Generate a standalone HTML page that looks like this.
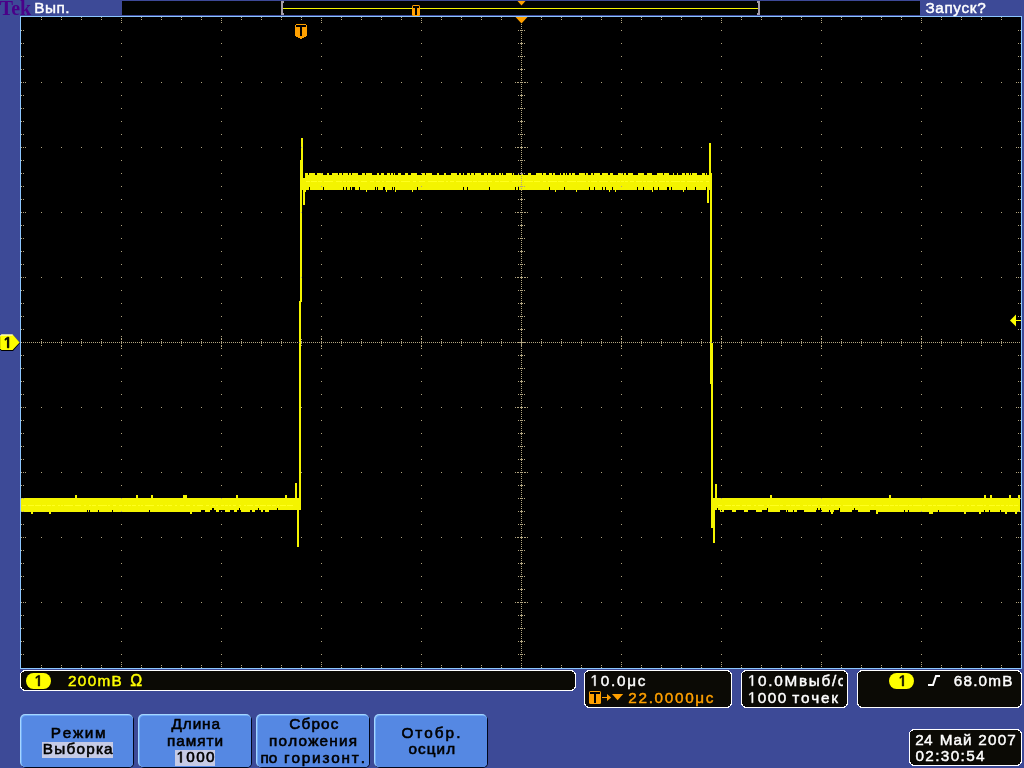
<!DOCTYPE html>
<html><head><meta charset="utf-8"><title>Tek</title>
<style>
html,body{margin:0;padding:0;background:#3d4a97;width:1024px;height:768px;overflow:hidden}
svg{display:block;will-change:transform;font-family:"Liberation Sans",sans-serif}
</style></head><body>
<svg width="1024" height="768" viewBox="0 0 1024 768" shape-rendering="crispEdges" font-family="Liberation Sans, sans-serif" stroke-width="0.35"><rect width="1024" height="768" fill="#3d4a97"/><rect x="122" y="1" width="798" height="14" fill="#010301"/><rect x="20" y="16" width="1002" height="653" fill="#8cc6ff"/><rect x="21" y="17" width="1000" height="651" fill="#000"/><path d="M21 498h10v14h-10zM33 498h16v14h-16zM51 498h24v14h-24zM77 498h10v14h-10zM88 498h1v14h-1zM90 498h8v14h-8zM99 498h13v14h-13zM113 498h23v14h-23zM138 498h11v14h-11zM150 498h1v14h-1zM153 498h30v14h-30zM187 498h3v14h-3zM192 498h9v14h-9zM205 498h5v14h-5zM216 498h3v14h-3zM225 498h5v14h-5zM234 498h2v14h-2zM241 498h9v14h-9zM252 498h3v14h-3zM261 498h2v14h-2zM265 498h4v14h-4zM720 498h1v14h-1zM722 498h2v14h-2zM732 498h4v14h-4zM744 498h4v14h-4zM756 498h6v14h-6zM768 498h2v14h-2zM772 498h8v14h-8zM786 498h1v14h-1zM788 498h5v14h-5zM794 498h3v14h-3zM804 498h12v14h-12zM822 498h7v14h-7zM830 498h1v14h-1zM833 498h1v14h-1zM840 498h12v14h-12zM858 498h12v14h-12zM878 498h11v14h-11zM891 498h13v14h-13zM905 498h3v14h-3zM909 498h20v14h-20zM933 498h5v14h-5zM939 498h25v14h-25zM966 498h13v14h-13zM981 498h3v14h-3zM986 498h3v14h-3zM992 498h8v14h-8zM1001 498h4v14h-4zM1007 498h2v14h-2zM1011 498h4v14h-4zM1017 498h1v14h-1zM31 498h2v16h-2zM49 498h2v16h-2zM190 498h2v16h-2zM831 498h2v16h-2zM876 498h2v16h-2zM929 498h4v16h-4zM964 498h2v16h-2zM979 498h2v16h-2zM1005 498h2v16h-2zM1015 498h2v16h-2zM75 495h2v17h-2zM136 495h2v17h-2zM151 495h2v17h-2zM183 495h4v17h-4zM236 495h1v17h-1zM770 495h2v17h-2zM889 495h2v17h-2zM985 495h1v17h-1zM990 495h2v17h-2zM1009 495h2v17h-2zM1018 495h2v17h-2zM87 498h1v12h-1zM89 498h1v12h-1zM98 498h1v12h-1zM112 498h1v12h-1zM149 498h1v12h-1zM201 498h4v12h-4zM210 498h2v12h-2zM214 498h2v12h-2zM219 498h6v12h-6zM230 498h4v12h-4zM238 498h1v12h-1zM240 498h1v12h-1zM250 498h2v12h-2zM255 498h3v12h-3zM259 498h2v12h-2zM263 498h2v12h-2zM269 498h8v12h-8zM278 498h7v12h-7zM287 498h8v12h-8zM716 498h1v12h-1zM718 498h2v12h-2zM721 498h1v12h-1zM724 498h8v12h-8zM736 498h8v12h-8zM748 498h8v12h-8zM762 498h5v12h-5zM780 498h6v12h-6zM787 498h1v12h-1zM793 498h1v12h-1zM797 498h7v12h-7zM816 498h1v12h-1zM818 498h2v12h-2zM821 498h1v12h-1zM829 498h1v12h-1zM834 498h5v12h-5zM852 498h2v12h-2zM855 498h3v12h-3zM870 498h6v12h-6zM904 498h1v12h-1zM908 498h1v12h-1zM938 498h1v12h-1zM989 498h1v12h-1zM1000 498h1v12h-1zM212 498h2v10h-2zM239 498h1v10h-1zM258 498h1v10h-1zM277 498h1v10h-1zM717 498h1v10h-1zM767 498h1v10h-1zM817 498h1v10h-1zM820 498h1v10h-1zM839 498h1v10h-1zM854 498h1v10h-1zM237 495h1v15h-1zM285 495h2v15h-2zM984 495h1v15h-1zM295 483h2v27h-2zM297 498h2v49h-2zM299 301h1v209h-1zM300 160h1v350h-1zM300 160h1v142h-1zM300 160h1v30h-1zM301 138h1v164h-1zM301 138h2v52h-2zM303 178h2v27h-2zM305 173h1v19h-1zM366 173h1v19h-1zM412 173h1v19h-1zM683 173h1v19h-1zM306 173h2v17h-2zM310 173h5v17h-5zM317 173h6v17h-6zM327 173h2v17h-2zM332 173h6v17h-6zM339 173h3v17h-3zM344 173h2v17h-2zM347 173h1v17h-1zM349 173h1v17h-1zM355 173h3v17h-3zM362 173h3v17h-3zM367 173h5v17h-5zM378 173h1v17h-1zM381 173h2v17h-2zM387 173h3v17h-3zM391 173h1v17h-1zM398 173h3v17h-3zM405 173h3v17h-3zM411 173h1v17h-1zM413 173h4v17h-4zM422 173h3v17h-3zM426 173h6v17h-6zM437 173h2v17h-2zM444 173h2v17h-2zM451 173h6v17h-6zM459 173h2v17h-2zM468 173h2v17h-2zM471 173h3v17h-3zM475 173h6v17h-6zM484 173h3v17h-3zM488 173h1v17h-1zM490 173h1v17h-1zM495 173h1v17h-1zM499 173h2v17h-2zM502 173h1v17h-1zM506 173h6v17h-6zM513 173h1v17h-1zM522 173h1v17h-1zM528 173h3v17h-3zM536 173h6v17h-6zM543 173h3v17h-3zM550 173h2v17h-2zM553 173h2v17h-2zM560 173h1v17h-1zM563 173h1v17h-1zM566 173h1v17h-1zM569 173h2v17h-2zM572 173h3v17h-3zM579 173h6v17h-6zM586 173h2v17h-2zM591 173h2v17h-2zM595 173h5v17h-5zM603 173h2v17h-2zM606 173h2v17h-2zM610 173h2v17h-2zM618 173h5v17h-5zM624 173h2v17h-2zM628 173h5v17h-5zM638 173h5v17h-5zM647 173h5v17h-5zM657 173h1v17h-1zM659 173h4v17h-4zM664 173h3v17h-3zM673 173h1v17h-1zM677 173h1v17h-1zM682 173h1v17h-1zM684 173h1v17h-1zM687 173h2v17h-2zM690 173h1v17h-1zM692 173h3v17h-3zM696 173h1v17h-1zM702 173h3v17h-3zM308 175h1v15h-1zM315 175h2v15h-2zM324 175h3v15h-3zM329 175h3v15h-3zM338 175h1v15h-1zM342 175h1v15h-1zM348 175h1v15h-1zM351 175h1v15h-1zM358 175h1v15h-1zM360 175h2v15h-2zM365 175h1v15h-1zM372 175h3v15h-3zM376 175h1v15h-1zM379 175h2v15h-2zM385 175h1v15h-1zM390 175h1v15h-1zM393 175h1v15h-1zM396 175h2v15h-2zM401 175h4v15h-4zM408 175h3v15h-3zM418 175h4v15h-4zM425 175h1v15h-1zM432 175h5v15h-5zM439 175h5v15h-5zM446 175h5v15h-5zM457 175h2v15h-2zM461 175h2v15h-2zM464 175h3v15h-3zM470 175h1v15h-1zM474 175h1v15h-1zM481 175h3v15h-3zM487 175h1v15h-1zM491 175h4v15h-4zM496 175h3v15h-3zM501 175h1v15h-1zM503 175h3v15h-3zM512 175h1v15h-1zM514 175h1v15h-1zM516 175h2v15h-2zM519 175h3v15h-3zM523 175h5v15h-5zM531 175h5v15h-5zM542 175h1v15h-1zM546 175h3v15h-3zM552 175h1v15h-1zM556 175h4v15h-4zM561 175h2v15h-2zM565 175h1v15h-1zM567 175h2v15h-2zM571 175h1v15h-1zM575 175h1v15h-1zM577 175h2v15h-2zM585 175h1v15h-1zM588 175h1v15h-1zM590 175h1v15h-1zM593 175h1v15h-1zM600 175h2v15h-2zM608 175h1v15h-1zM613 175h2v15h-2zM616 175h2v15h-2zM623 175h1v15h-1zM626 175h2v15h-2zM633 175h4v15h-4zM644 175h3v15h-3zM654 175h3v15h-3zM663 175h1v15h-1zM669 175h2v15h-2zM672 175h1v15h-1zM674 175h3v15h-3zM678 175h4v15h-4zM685 175h1v15h-1zM689 175h1v15h-1zM691 175h1v15h-1zM697 175h5v15h-5zM705 175h1v15h-1zM707 175h3v15h-3zM309 173h1v14h-1zM343 173h1v14h-1zM346 173h1v14h-1zM350 173h1v14h-1zM352 173h3v14h-3zM377 173h1v14h-1zM383 173h1v14h-1zM392 173h1v14h-1zM394 173h1v14h-1zM463 173h1v14h-1zM467 173h1v14h-1zM489 173h1v14h-1zM518 173h1v14h-1zM549 173h1v14h-1zM564 173h1v14h-1zM594 173h1v14h-1zM602 173h1v14h-1zM605 173h1v14h-1zM612 173h1v14h-1zM643 173h1v14h-1zM658 173h1v14h-1zM667 173h2v14h-2zM686 173h1v14h-1zM695 173h1v14h-1zM706 173h1v14h-1zM323 175h1v12h-1zM359 175h1v12h-1zM375 175h1v12h-1zM384 175h1v12h-1zM417 175h1v12h-1zM515 175h1v12h-1zM589 175h1v12h-1zM637 175h1v12h-1zM653 175h1v12h-1zM671 175h1v12h-1zM386 175h1v17h-1zM395 175h1v17h-1zM555 175h1v17h-1zM576 175h1v17h-1zM609 175h1v17h-1zM615 175h1v17h-1zM652 175h1v17h-1zM707 175h2v28h-2zM709 143h1v47h-1zM710 143h1v201h-1zM710 343h1v41h-1zM711 173h1v355h-1zM712 343h1v185h-1zM713 498h2v45h-2zM715 484h2v26h-2z" fill="#f4f400" stroke="none"/><path d="M306 181h4v1h-4zM311 181h6v1h-6zM318 181h4v1h-4zM324 181h9v1h-9zM336 181h6v1h-6zM343 181h3v1h-3zM347 181h4v1h-4zM352 181h6v1h-6zM361 181h6v1h-6zM370 181h4v1h-4zM376 181h4v1h-4zM382 181h2v1h-2zM386 181h9v1h-9zM396 181h3v1h-3zM401 181h9v1h-9zM413 181h3v1h-3zM419 181h6v1h-6zM428 181h9v1h-9zM438 181h6v1h-6zM446 181h2v1h-2zM450 181h4v1h-4zM456 181h6v1h-6zM463 181h9v1h-9zM473 181h4v1h-4zM478 181h9v1h-9zM488 181h4v1h-4zM495 181h4v1h-4zM500 181h9v1h-9zM512 181h6v1h-6zM519 181h3v1h-3zM524 181h9v1h-9zM534 181h6v1h-6zM543 181h3v1h-3zM548 181h9v1h-9zM558 181h6v1h-6zM567 181h9v1h-9zM577 181h9v1h-9zM588 181h2v1h-2zM591 181h6v1h-6zM599 181h9v1h-9zM610 181h6v1h-6zM617 181h3v1h-3zM621 181h3v1h-3zM625 181h3v1h-3zM630 181h4v1h-4zM636 181h6v1h-6zM643 181h3v1h-3zM647 181h6v1h-6zM655 181h2v1h-2zM659 181h6v1h-6zM666 181h3v1h-3zM671 181h9v1h-9zM681 181h4v1h-4zM687 181h9v1h-9zM697 181h2v1h-2zM700 181h3v1h-3zM706 181h3v1h-3zM22 505h4v1h-4zM28 505h6v1h-6zM35 505h6v1h-6zM42 505h4v1h-4zM47 505h4v1h-4zM52 505h3v1h-3zM58 505h2v1h-2zM61 505h2v1h-2zM64 505h9v1h-9zM75 505h6v1h-6zM84 505h2v1h-2zM89 505h2v1h-2zM92 505h4v1h-4zM98 505h9v1h-9zM108 505h2v1h-2zM113 505h3v1h-3zM119 505h3v1h-3zM124 505h3v1h-3zM128 505h3v1h-3zM132 505h4v1h-4zM138 505h2v1h-2zM141 505h2v1h-2zM145 505h9v1h-9zM157 505h2v1h-2zM160 505h3v1h-3zM165 505h2v1h-2zM168 505h4v1h-4zM175 505h2v1h-2zM180 505h4v1h-4zM186 505h4v1h-4zM193 505h2v1h-2zM197 505h6v1h-6zM206 505h3v1h-3zM212 505h3v1h-3zM216 505h2v1h-2zM221 505h3v1h-3zM225 505h3v1h-3zM229 505h2v1h-2zM233 505h3v1h-3zM239 505h2v1h-2zM244 505h2v1h-2zM247 505h6v1h-6zM255 505h4v1h-4zM260 505h6v1h-6zM267 505h4v1h-4zM272 505h4v1h-4zM277 505h2v1h-2zM280 505h6v1h-6zM287 505h6v1h-6zM718 505h4v1h-4zM725 505h6v1h-6zM732 505h3v1h-3zM736 505h4v1h-4zM742 505h4v1h-4zM747 505h4v1h-4zM754 505h2v1h-2zM758 505h6v1h-6zM767 505h2v1h-2zM770 505h9v1h-9zM780 505h3v1h-3zM786 505h4v1h-4zM791 505h4v1h-4zM796 505h4v1h-4zM803 505h4v1h-4zM808 505h3v1h-3zM812 505h6v1h-6zM820 505h6v1h-6zM827 505h2v1h-2zM831 505h3v1h-3zM835 505h6v1h-6zM843 505h9v1h-9zM853 505h6v1h-6zM860 505h9v1h-9zM871 505h3v1h-3zM876 505h6v1h-6zM883 505h6v1h-6zM890 505h4v1h-4zM895 505h3v1h-3zM899 505h9v1h-9zM909 505h3v1h-3zM913 505h9v1h-9zM923 505h2v1h-2zM928 505h4v1h-4zM933 505h3v1h-3zM937 505h9v1h-9zM947 505h9v1h-9zM958 505h3v1h-3zM962 505h2v1h-2zM967 505h2v1h-2zM971 505h4v1h-4zM977 505h6v1h-6zM984 505h2v1h-2zM989 505h6v1h-6zM996 505h4v1h-4zM1001 505h3v1h-3zM1006 505h2v1h-2zM1009 505h4v1h-4zM1014 505h4v1h-4z" fill="#ffff1e" stroke="none"/><path d="M121 30h1v1h-1zM121 43h1v1h-1zM121 56h1v1h-1zM121 69h1v1h-1zM121 82h1v1h-1zM121 95h1v1h-1zM121 108h1v1h-1zM121 121h1v1h-1zM121 134h1v1h-1zM121 147h1v1h-1zM121 160h1v1h-1zM121 173h1v1h-1zM121 186h1v1h-1zM121 199h1v1h-1zM121 212h1v1h-1zM121 225h1v1h-1zM121 238h1v1h-1zM121 251h1v1h-1zM121 264h1v1h-1zM121 277h1v1h-1zM121 290h1v1h-1zM121 303h1v1h-1zM121 316h1v1h-1zM121 329h1v1h-1zM121 355h1v1h-1zM121 368h1v1h-1zM121 381h1v1h-1zM121 394h1v1h-1zM121 407h1v1h-1zM121 420h1v1h-1zM121 433h1v1h-1zM121 446h1v1h-1zM121 459h1v1h-1zM121 472h1v1h-1zM121 485h1v1h-1zM121 498h1v1h-1zM121 511h1v1h-1zM121 524h1v1h-1zM121 537h1v1h-1zM121 550h1v1h-1zM121 563h1v1h-1zM121 576h1v1h-1zM121 589h1v1h-1zM121 602h1v1h-1zM121 615h1v1h-1zM121 628h1v1h-1zM121 641h1v1h-1zM121 654h1v1h-1zM221 30h1v1h-1zM221 43h1v1h-1zM221 56h1v1h-1zM221 69h1v1h-1zM221 82h1v1h-1zM221 95h1v1h-1zM221 108h1v1h-1zM221 121h1v1h-1zM221 134h1v1h-1zM221 147h1v1h-1zM221 160h1v1h-1zM221 173h1v1h-1zM221 186h1v1h-1zM221 199h1v1h-1zM221 212h1v1h-1zM221 225h1v1h-1zM221 238h1v1h-1zM221 251h1v1h-1zM221 264h1v1h-1zM221 277h1v1h-1zM221 290h1v1h-1zM221 303h1v1h-1zM221 316h1v1h-1zM221 329h1v1h-1zM221 355h1v1h-1zM221 368h1v1h-1zM221 381h1v1h-1zM221 394h1v1h-1zM221 407h1v1h-1zM221 420h1v1h-1zM221 433h1v1h-1zM221 446h1v1h-1zM221 459h1v1h-1zM221 472h1v1h-1zM221 485h1v1h-1zM221 498h1v1h-1zM221 511h1v1h-1zM221 524h1v1h-1zM221 537h1v1h-1zM221 550h1v1h-1zM221 563h1v1h-1zM221 576h1v1h-1zM221 589h1v1h-1zM221 602h1v1h-1zM221 615h1v1h-1zM221 628h1v1h-1zM221 641h1v1h-1zM221 654h1v1h-1zM321 30h1v1h-1zM321 43h1v1h-1zM321 56h1v1h-1zM321 69h1v1h-1zM321 82h1v1h-1zM321 95h1v1h-1zM321 108h1v1h-1zM321 121h1v1h-1zM321 134h1v1h-1zM321 147h1v1h-1zM321 160h1v1h-1zM321 173h1v1h-1zM321 186h1v1h-1zM321 199h1v1h-1zM321 212h1v1h-1zM321 225h1v1h-1zM321 238h1v1h-1zM321 251h1v1h-1zM321 264h1v1h-1zM321 277h1v1h-1zM321 290h1v1h-1zM321 303h1v1h-1zM321 316h1v1h-1zM321 329h1v1h-1zM321 355h1v1h-1zM321 368h1v1h-1zM321 381h1v1h-1zM321 394h1v1h-1zM321 407h1v1h-1zM321 420h1v1h-1zM321 433h1v1h-1zM321 446h1v1h-1zM321 459h1v1h-1zM321 472h1v1h-1zM321 485h1v1h-1zM321 498h1v1h-1zM321 511h1v1h-1zM321 524h1v1h-1zM321 537h1v1h-1zM321 550h1v1h-1zM321 563h1v1h-1zM321 576h1v1h-1zM321 589h1v1h-1zM321 602h1v1h-1zM321 615h1v1h-1zM321 628h1v1h-1zM321 641h1v1h-1zM321 654h1v1h-1zM421 30h1v1h-1zM421 43h1v1h-1zM421 56h1v1h-1zM421 69h1v1h-1zM421 82h1v1h-1zM421 95h1v1h-1zM421 108h1v1h-1zM421 121h1v1h-1zM421 134h1v1h-1zM421 147h1v1h-1zM421 160h1v1h-1zM421 173h1v1h-1zM421 186h1v1h-1zM421 199h1v1h-1zM421 212h1v1h-1zM421 225h1v1h-1zM421 238h1v1h-1zM421 251h1v1h-1zM421 264h1v1h-1zM421 277h1v1h-1zM421 290h1v1h-1zM421 303h1v1h-1zM421 316h1v1h-1zM421 329h1v1h-1zM421 355h1v1h-1zM421 368h1v1h-1zM421 381h1v1h-1zM421 394h1v1h-1zM421 407h1v1h-1zM421 420h1v1h-1zM421 433h1v1h-1zM421 446h1v1h-1zM421 459h1v1h-1zM421 472h1v1h-1zM421 485h1v1h-1zM421 498h1v1h-1zM421 511h1v1h-1zM421 524h1v1h-1zM421 537h1v1h-1zM421 550h1v1h-1zM421 563h1v1h-1zM421 576h1v1h-1zM421 589h1v1h-1zM421 602h1v1h-1zM421 615h1v1h-1zM421 628h1v1h-1zM421 641h1v1h-1zM421 654h1v1h-1zM621 30h1v1h-1zM621 43h1v1h-1zM621 56h1v1h-1zM621 69h1v1h-1zM621 82h1v1h-1zM621 95h1v1h-1zM621 108h1v1h-1zM621 121h1v1h-1zM621 134h1v1h-1zM621 147h1v1h-1zM621 160h1v1h-1zM621 173h1v1h-1zM621 186h1v1h-1zM621 199h1v1h-1zM621 212h1v1h-1zM621 225h1v1h-1zM621 238h1v1h-1zM621 251h1v1h-1zM621 264h1v1h-1zM621 277h1v1h-1zM621 290h1v1h-1zM621 303h1v1h-1zM621 316h1v1h-1zM621 329h1v1h-1zM621 355h1v1h-1zM621 368h1v1h-1zM621 381h1v1h-1zM621 394h1v1h-1zM621 407h1v1h-1zM621 420h1v1h-1zM621 433h1v1h-1zM621 446h1v1h-1zM621 459h1v1h-1zM621 472h1v1h-1zM621 485h1v1h-1zM621 498h1v1h-1zM621 511h1v1h-1zM621 524h1v1h-1zM621 537h1v1h-1zM621 550h1v1h-1zM621 563h1v1h-1zM621 576h1v1h-1zM621 589h1v1h-1zM621 602h1v1h-1zM621 615h1v1h-1zM621 628h1v1h-1zM621 641h1v1h-1zM621 654h1v1h-1zM721 30h1v1h-1zM721 43h1v1h-1zM721 56h1v1h-1zM721 69h1v1h-1zM721 82h1v1h-1zM721 95h1v1h-1zM721 108h1v1h-1zM721 121h1v1h-1zM721 134h1v1h-1zM721 147h1v1h-1zM721 160h1v1h-1zM721 173h1v1h-1zM721 186h1v1h-1zM721 199h1v1h-1zM721 212h1v1h-1zM721 225h1v1h-1zM721 238h1v1h-1zM721 251h1v1h-1zM721 264h1v1h-1zM721 277h1v1h-1zM721 290h1v1h-1zM721 303h1v1h-1zM721 316h1v1h-1zM721 329h1v1h-1zM721 355h1v1h-1zM721 368h1v1h-1zM721 381h1v1h-1zM721 394h1v1h-1zM721 407h1v1h-1zM721 420h1v1h-1zM721 433h1v1h-1zM721 446h1v1h-1zM721 459h1v1h-1zM721 472h1v1h-1zM721 485h1v1h-1zM721 498h1v1h-1zM721 511h1v1h-1zM721 524h1v1h-1zM721 537h1v1h-1zM721 550h1v1h-1zM721 563h1v1h-1zM721 576h1v1h-1zM721 589h1v1h-1zM721 602h1v1h-1zM721 615h1v1h-1zM721 628h1v1h-1zM721 641h1v1h-1zM721 654h1v1h-1zM821 30h1v1h-1zM821 43h1v1h-1zM821 56h1v1h-1zM821 69h1v1h-1zM821 82h1v1h-1zM821 95h1v1h-1zM821 108h1v1h-1zM821 121h1v1h-1zM821 134h1v1h-1zM821 147h1v1h-1zM821 160h1v1h-1zM821 173h1v1h-1zM821 186h1v1h-1zM821 199h1v1h-1zM821 212h1v1h-1zM821 225h1v1h-1zM821 238h1v1h-1zM821 251h1v1h-1zM821 264h1v1h-1zM821 277h1v1h-1zM821 290h1v1h-1zM821 303h1v1h-1zM821 316h1v1h-1zM821 329h1v1h-1zM821 355h1v1h-1zM821 368h1v1h-1zM821 381h1v1h-1zM821 394h1v1h-1zM821 407h1v1h-1zM821 420h1v1h-1zM821 433h1v1h-1zM821 446h1v1h-1zM821 459h1v1h-1zM821 472h1v1h-1zM821 485h1v1h-1zM821 498h1v1h-1zM821 511h1v1h-1zM821 524h1v1h-1zM821 537h1v1h-1zM821 550h1v1h-1zM821 563h1v1h-1zM821 576h1v1h-1zM821 589h1v1h-1zM821 602h1v1h-1zM821 615h1v1h-1zM821 628h1v1h-1zM821 641h1v1h-1zM821 654h1v1h-1zM921 30h1v1h-1zM921 43h1v1h-1zM921 56h1v1h-1zM921 69h1v1h-1zM921 82h1v1h-1zM921 95h1v1h-1zM921 108h1v1h-1zM921 121h1v1h-1zM921 134h1v1h-1zM921 147h1v1h-1zM921 160h1v1h-1zM921 173h1v1h-1zM921 186h1v1h-1zM921 199h1v1h-1zM921 212h1v1h-1zM921 225h1v1h-1zM921 238h1v1h-1zM921 251h1v1h-1zM921 264h1v1h-1zM921 277h1v1h-1zM921 290h1v1h-1zM921 303h1v1h-1zM921 316h1v1h-1zM921 329h1v1h-1zM921 355h1v1h-1zM921 368h1v1h-1zM921 381h1v1h-1zM921 394h1v1h-1zM921 407h1v1h-1zM921 420h1v1h-1zM921 433h1v1h-1zM921 446h1v1h-1zM921 459h1v1h-1zM921 472h1v1h-1zM921 485h1v1h-1zM921 498h1v1h-1zM921 511h1v1h-1zM921 524h1v1h-1zM921 537h1v1h-1zM921 550h1v1h-1zM921 563h1v1h-1zM921 576h1v1h-1zM921 589h1v1h-1zM921 602h1v1h-1zM921 615h1v1h-1zM921 628h1v1h-1zM921 641h1v1h-1zM921 654h1v1h-1zM41 82h1v1h-1zM61 82h1v1h-1zM81 82h1v1h-1zM101 82h1v1h-1zM141 82h1v1h-1zM161 82h1v1h-1zM181 82h1v1h-1zM201 82h1v1h-1zM241 82h1v1h-1zM261 82h1v1h-1zM281 82h1v1h-1zM301 82h1v1h-1zM341 82h1v1h-1zM361 82h1v1h-1zM381 82h1v1h-1zM401 82h1v1h-1zM441 82h1v1h-1zM461 82h1v1h-1zM481 82h1v1h-1zM501 82h1v1h-1zM541 82h1v1h-1zM561 82h1v1h-1zM581 82h1v1h-1zM601 82h1v1h-1zM641 82h1v1h-1zM661 82h1v1h-1zM681 82h1v1h-1zM701 82h1v1h-1zM741 82h1v1h-1zM761 82h1v1h-1zM781 82h1v1h-1zM801 82h1v1h-1zM841 82h1v1h-1zM861 82h1v1h-1zM881 82h1v1h-1zM901 82h1v1h-1zM941 82h1v1h-1zM961 82h1v1h-1zM981 82h1v1h-1zM1001 82h1v1h-1zM41 147h1v1h-1zM61 147h1v1h-1zM81 147h1v1h-1zM101 147h1v1h-1zM141 147h1v1h-1zM161 147h1v1h-1zM181 147h1v1h-1zM201 147h1v1h-1zM241 147h1v1h-1zM261 147h1v1h-1zM281 147h1v1h-1zM301 147h1v1h-1zM341 147h1v1h-1zM361 147h1v1h-1zM381 147h1v1h-1zM401 147h1v1h-1zM441 147h1v1h-1zM461 147h1v1h-1zM481 147h1v1h-1zM501 147h1v1h-1zM541 147h1v1h-1zM561 147h1v1h-1zM581 147h1v1h-1zM601 147h1v1h-1zM641 147h1v1h-1zM661 147h1v1h-1zM681 147h1v1h-1zM701 147h1v1h-1zM741 147h1v1h-1zM761 147h1v1h-1zM781 147h1v1h-1zM801 147h1v1h-1zM841 147h1v1h-1zM861 147h1v1h-1zM881 147h1v1h-1zM901 147h1v1h-1zM941 147h1v1h-1zM961 147h1v1h-1zM981 147h1v1h-1zM1001 147h1v1h-1zM41 212h1v1h-1zM61 212h1v1h-1zM81 212h1v1h-1zM101 212h1v1h-1zM141 212h1v1h-1zM161 212h1v1h-1zM181 212h1v1h-1zM201 212h1v1h-1zM241 212h1v1h-1zM261 212h1v1h-1zM281 212h1v1h-1zM301 212h1v1h-1zM341 212h1v1h-1zM361 212h1v1h-1zM381 212h1v1h-1zM401 212h1v1h-1zM441 212h1v1h-1zM461 212h1v1h-1zM481 212h1v1h-1zM501 212h1v1h-1zM541 212h1v1h-1zM561 212h1v1h-1zM581 212h1v1h-1zM601 212h1v1h-1zM641 212h1v1h-1zM661 212h1v1h-1zM681 212h1v1h-1zM701 212h1v1h-1zM741 212h1v1h-1zM761 212h1v1h-1zM781 212h1v1h-1zM801 212h1v1h-1zM841 212h1v1h-1zM861 212h1v1h-1zM881 212h1v1h-1zM901 212h1v1h-1zM941 212h1v1h-1zM961 212h1v1h-1zM981 212h1v1h-1zM1001 212h1v1h-1zM41 277h1v1h-1zM61 277h1v1h-1zM81 277h1v1h-1zM101 277h1v1h-1zM141 277h1v1h-1zM161 277h1v1h-1zM181 277h1v1h-1zM201 277h1v1h-1zM241 277h1v1h-1zM261 277h1v1h-1zM281 277h1v1h-1zM301 277h1v1h-1zM341 277h1v1h-1zM361 277h1v1h-1zM381 277h1v1h-1zM401 277h1v1h-1zM441 277h1v1h-1zM461 277h1v1h-1zM481 277h1v1h-1zM501 277h1v1h-1zM541 277h1v1h-1zM561 277h1v1h-1zM581 277h1v1h-1zM601 277h1v1h-1zM641 277h1v1h-1zM661 277h1v1h-1zM681 277h1v1h-1zM701 277h1v1h-1zM741 277h1v1h-1zM761 277h1v1h-1zM781 277h1v1h-1zM801 277h1v1h-1zM841 277h1v1h-1zM861 277h1v1h-1zM881 277h1v1h-1zM901 277h1v1h-1zM941 277h1v1h-1zM961 277h1v1h-1zM981 277h1v1h-1zM1001 277h1v1h-1zM41 407h1v1h-1zM61 407h1v1h-1zM81 407h1v1h-1zM101 407h1v1h-1zM141 407h1v1h-1zM161 407h1v1h-1zM181 407h1v1h-1zM201 407h1v1h-1zM241 407h1v1h-1zM261 407h1v1h-1zM281 407h1v1h-1zM301 407h1v1h-1zM341 407h1v1h-1zM361 407h1v1h-1zM381 407h1v1h-1zM401 407h1v1h-1zM441 407h1v1h-1zM461 407h1v1h-1zM481 407h1v1h-1zM501 407h1v1h-1zM541 407h1v1h-1zM561 407h1v1h-1zM581 407h1v1h-1zM601 407h1v1h-1zM641 407h1v1h-1zM661 407h1v1h-1zM681 407h1v1h-1zM701 407h1v1h-1zM741 407h1v1h-1zM761 407h1v1h-1zM781 407h1v1h-1zM801 407h1v1h-1zM841 407h1v1h-1zM861 407h1v1h-1zM881 407h1v1h-1zM901 407h1v1h-1zM941 407h1v1h-1zM961 407h1v1h-1zM981 407h1v1h-1zM1001 407h1v1h-1zM41 472h1v1h-1zM61 472h1v1h-1zM81 472h1v1h-1zM101 472h1v1h-1zM141 472h1v1h-1zM161 472h1v1h-1zM181 472h1v1h-1zM201 472h1v1h-1zM241 472h1v1h-1zM261 472h1v1h-1zM281 472h1v1h-1zM301 472h1v1h-1zM341 472h1v1h-1zM361 472h1v1h-1zM381 472h1v1h-1zM401 472h1v1h-1zM441 472h1v1h-1zM461 472h1v1h-1zM481 472h1v1h-1zM501 472h1v1h-1zM541 472h1v1h-1zM561 472h1v1h-1zM581 472h1v1h-1zM601 472h1v1h-1zM641 472h1v1h-1zM661 472h1v1h-1zM681 472h1v1h-1zM701 472h1v1h-1zM741 472h1v1h-1zM761 472h1v1h-1zM781 472h1v1h-1zM801 472h1v1h-1zM841 472h1v1h-1zM861 472h1v1h-1zM881 472h1v1h-1zM901 472h1v1h-1zM941 472h1v1h-1zM961 472h1v1h-1zM981 472h1v1h-1zM1001 472h1v1h-1zM41 537h1v1h-1zM61 537h1v1h-1zM81 537h1v1h-1zM101 537h1v1h-1zM141 537h1v1h-1zM161 537h1v1h-1zM181 537h1v1h-1zM201 537h1v1h-1zM241 537h1v1h-1zM261 537h1v1h-1zM281 537h1v1h-1zM301 537h1v1h-1zM341 537h1v1h-1zM361 537h1v1h-1zM381 537h1v1h-1zM401 537h1v1h-1zM441 537h1v1h-1zM461 537h1v1h-1zM481 537h1v1h-1zM501 537h1v1h-1zM541 537h1v1h-1zM561 537h1v1h-1zM581 537h1v1h-1zM601 537h1v1h-1zM641 537h1v1h-1zM661 537h1v1h-1zM681 537h1v1h-1zM701 537h1v1h-1zM741 537h1v1h-1zM761 537h1v1h-1zM781 537h1v1h-1zM801 537h1v1h-1zM841 537h1v1h-1zM861 537h1v1h-1zM881 537h1v1h-1zM901 537h1v1h-1zM941 537h1v1h-1zM961 537h1v1h-1zM981 537h1v1h-1zM1001 537h1v1h-1zM41 602h1v1h-1zM61 602h1v1h-1zM81 602h1v1h-1zM101 602h1v1h-1zM141 602h1v1h-1zM161 602h1v1h-1zM181 602h1v1h-1zM201 602h1v1h-1zM241 602h1v1h-1zM261 602h1v1h-1zM281 602h1v1h-1zM301 602h1v1h-1zM341 602h1v1h-1zM361 602h1v1h-1zM381 602h1v1h-1zM401 602h1v1h-1zM441 602h1v1h-1zM461 602h1v1h-1zM481 602h1v1h-1zM501 602h1v1h-1zM541 602h1v1h-1zM561 602h1v1h-1zM581 602h1v1h-1zM601 602h1v1h-1zM641 602h1v1h-1zM661 602h1v1h-1zM681 602h1v1h-1zM701 602h1v1h-1zM741 602h1v1h-1zM761 602h1v1h-1zM781 602h1v1h-1zM801 602h1v1h-1zM841 602h1v1h-1zM861 602h1v1h-1zM881 602h1v1h-1zM901 602h1v1h-1zM941 602h1v1h-1zM961 602h1v1h-1zM981 602h1v1h-1zM1001 602h1v1h-1zM21 342h1v1h-1zM23 342h1v1h-1zM25 342h1v1h-1zM27 342h1v1h-1zM29 342h1v1h-1zM31 342h1v1h-1zM33 342h1v1h-1zM35 342h1v1h-1zM37 342h1v1h-1zM39 342h1v1h-1zM41 342h1v1h-1zM43 342h1v1h-1zM45 342h1v1h-1zM47 342h1v1h-1zM49 342h1v1h-1zM51 342h1v1h-1zM53 342h1v1h-1zM55 342h1v1h-1zM57 342h1v1h-1zM59 342h1v1h-1zM61 342h1v1h-1zM63 342h1v1h-1zM65 342h1v1h-1zM67 342h1v1h-1zM69 342h1v1h-1zM71 342h1v1h-1zM73 342h1v1h-1zM75 342h1v1h-1zM77 342h1v1h-1zM79 342h1v1h-1zM81 342h1v1h-1zM83 342h1v1h-1zM85 342h1v1h-1zM87 342h1v1h-1zM89 342h1v1h-1zM91 342h1v1h-1zM93 342h1v1h-1zM95 342h1v1h-1zM97 342h1v1h-1zM99 342h1v1h-1zM101 342h1v1h-1zM103 342h1v1h-1zM105 342h1v1h-1zM107 342h1v1h-1zM109 342h1v1h-1zM111 342h1v1h-1zM113 342h1v1h-1zM115 342h1v1h-1zM117 342h1v1h-1zM119 342h1v1h-1zM121 342h1v1h-1zM123 342h1v1h-1zM125 342h1v1h-1zM127 342h1v1h-1zM129 342h1v1h-1zM131 342h1v1h-1zM133 342h1v1h-1zM135 342h1v1h-1zM137 342h1v1h-1zM139 342h1v1h-1zM141 342h1v1h-1zM143 342h1v1h-1zM145 342h1v1h-1zM147 342h1v1h-1zM149 342h1v1h-1zM151 342h1v1h-1zM153 342h1v1h-1zM155 342h1v1h-1zM157 342h1v1h-1zM159 342h1v1h-1zM161 342h1v1h-1zM163 342h1v1h-1zM165 342h1v1h-1zM167 342h1v1h-1zM169 342h1v1h-1zM171 342h1v1h-1zM173 342h1v1h-1zM175 342h1v1h-1zM177 342h1v1h-1zM179 342h1v1h-1zM181 342h1v1h-1zM183 342h1v1h-1zM185 342h1v1h-1zM187 342h1v1h-1zM189 342h1v1h-1zM191 342h1v1h-1zM193 342h1v1h-1zM195 342h1v1h-1zM197 342h1v1h-1zM199 342h1v1h-1zM201 342h1v1h-1zM203 342h1v1h-1zM205 342h1v1h-1zM207 342h1v1h-1zM209 342h1v1h-1zM211 342h1v1h-1zM213 342h1v1h-1zM215 342h1v1h-1zM217 342h1v1h-1zM219 342h1v1h-1zM221 342h1v1h-1zM223 342h1v1h-1zM225 342h1v1h-1zM227 342h1v1h-1zM229 342h1v1h-1zM231 342h1v1h-1zM233 342h1v1h-1zM235 342h1v1h-1zM237 342h1v1h-1zM239 342h1v1h-1zM241 342h1v1h-1zM243 342h1v1h-1zM245 342h1v1h-1zM247 342h1v1h-1zM249 342h1v1h-1zM251 342h1v1h-1zM253 342h1v1h-1zM255 342h1v1h-1zM257 342h1v1h-1zM259 342h1v1h-1zM261 342h1v1h-1zM263 342h1v1h-1zM265 342h1v1h-1zM267 342h1v1h-1zM269 342h1v1h-1zM271 342h1v1h-1zM273 342h1v1h-1zM275 342h1v1h-1zM277 342h1v1h-1zM279 342h1v1h-1zM281 342h1v1h-1zM283 342h1v1h-1zM285 342h1v1h-1zM287 342h1v1h-1zM289 342h1v1h-1zM291 342h1v1h-1zM293 342h1v1h-1zM295 342h1v1h-1zM297 342h1v1h-1zM299 342h1v1h-1zM301 342h1v1h-1zM303 342h1v1h-1zM305 342h1v1h-1zM307 342h1v1h-1zM309 342h1v1h-1zM311 342h1v1h-1zM313 342h1v1h-1zM315 342h1v1h-1zM317 342h1v1h-1zM319 342h1v1h-1zM321 342h1v1h-1zM323 342h1v1h-1zM325 342h1v1h-1zM327 342h1v1h-1zM329 342h1v1h-1zM331 342h1v1h-1zM333 342h1v1h-1zM335 342h1v1h-1zM337 342h1v1h-1zM339 342h1v1h-1zM341 342h1v1h-1zM343 342h1v1h-1zM345 342h1v1h-1zM347 342h1v1h-1zM349 342h1v1h-1zM351 342h1v1h-1zM353 342h1v1h-1zM355 342h1v1h-1zM357 342h1v1h-1zM359 342h1v1h-1zM361 342h1v1h-1zM363 342h1v1h-1zM365 342h1v1h-1zM367 342h1v1h-1zM369 342h1v1h-1zM371 342h1v1h-1zM373 342h1v1h-1zM375 342h1v1h-1zM377 342h1v1h-1zM379 342h1v1h-1zM381 342h1v1h-1zM383 342h1v1h-1zM385 342h1v1h-1zM387 342h1v1h-1zM389 342h1v1h-1zM391 342h1v1h-1zM393 342h1v1h-1zM395 342h1v1h-1zM397 342h1v1h-1zM399 342h1v1h-1zM401 342h1v1h-1zM403 342h1v1h-1zM405 342h1v1h-1zM407 342h1v1h-1zM409 342h1v1h-1zM411 342h1v1h-1zM413 342h1v1h-1zM415 342h1v1h-1zM417 342h1v1h-1zM419 342h1v1h-1zM421 342h1v1h-1zM423 342h1v1h-1zM425 342h1v1h-1zM427 342h1v1h-1zM429 342h1v1h-1zM431 342h1v1h-1zM433 342h1v1h-1zM435 342h1v1h-1zM437 342h1v1h-1zM439 342h1v1h-1zM441 342h1v1h-1zM443 342h1v1h-1zM445 342h1v1h-1zM447 342h1v1h-1zM449 342h1v1h-1zM451 342h1v1h-1zM453 342h1v1h-1zM455 342h1v1h-1zM457 342h1v1h-1zM459 342h1v1h-1zM461 342h1v1h-1zM463 342h1v1h-1zM465 342h1v1h-1zM467 342h1v1h-1zM469 342h1v1h-1zM471 342h1v1h-1zM473 342h1v1h-1zM475 342h1v1h-1zM477 342h1v1h-1zM479 342h1v1h-1zM481 342h1v1h-1zM483 342h1v1h-1zM485 342h1v1h-1zM487 342h1v1h-1zM489 342h1v1h-1zM491 342h1v1h-1zM493 342h1v1h-1zM495 342h1v1h-1zM497 342h1v1h-1zM499 342h1v1h-1zM501 342h1v1h-1zM503 342h1v1h-1zM505 342h1v1h-1zM507 342h1v1h-1zM509 342h1v1h-1zM511 342h1v1h-1zM513 342h1v1h-1zM515 342h1v1h-1zM517 342h1v1h-1zM519 342h1v1h-1zM521 342h1v1h-1zM523 342h1v1h-1zM525 342h1v1h-1zM527 342h1v1h-1zM529 342h1v1h-1zM531 342h1v1h-1zM533 342h1v1h-1zM535 342h1v1h-1zM537 342h1v1h-1zM539 342h1v1h-1zM541 342h1v1h-1zM543 342h1v1h-1zM545 342h1v1h-1zM547 342h1v1h-1zM549 342h1v1h-1zM551 342h1v1h-1zM553 342h1v1h-1zM555 342h1v1h-1zM557 342h1v1h-1zM559 342h1v1h-1zM561 342h1v1h-1zM563 342h1v1h-1zM565 342h1v1h-1zM567 342h1v1h-1zM569 342h1v1h-1zM571 342h1v1h-1zM573 342h1v1h-1zM575 342h1v1h-1zM577 342h1v1h-1zM579 342h1v1h-1zM581 342h1v1h-1zM583 342h1v1h-1zM585 342h1v1h-1zM587 342h1v1h-1zM589 342h1v1h-1zM591 342h1v1h-1zM593 342h1v1h-1zM595 342h1v1h-1zM597 342h1v1h-1zM599 342h1v1h-1zM601 342h1v1h-1zM603 342h1v1h-1zM605 342h1v1h-1zM607 342h1v1h-1zM609 342h1v1h-1zM611 342h1v1h-1zM613 342h1v1h-1zM615 342h1v1h-1zM617 342h1v1h-1zM619 342h1v1h-1zM621 342h1v1h-1zM623 342h1v1h-1zM625 342h1v1h-1zM627 342h1v1h-1zM629 342h1v1h-1zM631 342h1v1h-1zM633 342h1v1h-1zM635 342h1v1h-1zM637 342h1v1h-1zM639 342h1v1h-1zM641 342h1v1h-1zM643 342h1v1h-1zM645 342h1v1h-1zM647 342h1v1h-1zM649 342h1v1h-1zM651 342h1v1h-1zM653 342h1v1h-1zM655 342h1v1h-1zM657 342h1v1h-1zM659 342h1v1h-1zM661 342h1v1h-1zM663 342h1v1h-1zM665 342h1v1h-1zM667 342h1v1h-1zM669 342h1v1h-1zM671 342h1v1h-1zM673 342h1v1h-1zM675 342h1v1h-1zM677 342h1v1h-1zM679 342h1v1h-1zM681 342h1v1h-1zM683 342h1v1h-1zM685 342h1v1h-1zM687 342h1v1h-1zM689 342h1v1h-1zM691 342h1v1h-1zM693 342h1v1h-1zM695 342h1v1h-1zM697 342h1v1h-1zM699 342h1v1h-1zM701 342h1v1h-1zM703 342h1v1h-1zM705 342h1v1h-1zM707 342h1v1h-1zM709 342h1v1h-1zM711 342h1v1h-1zM713 342h1v1h-1zM715 342h1v1h-1zM717 342h1v1h-1zM719 342h1v1h-1zM721 342h1v1h-1zM723 342h1v1h-1zM725 342h1v1h-1zM727 342h1v1h-1zM729 342h1v1h-1zM731 342h1v1h-1zM733 342h1v1h-1zM735 342h1v1h-1zM737 342h1v1h-1zM739 342h1v1h-1zM741 342h1v1h-1zM743 342h1v1h-1zM745 342h1v1h-1zM747 342h1v1h-1zM749 342h1v1h-1zM751 342h1v1h-1zM753 342h1v1h-1zM755 342h1v1h-1zM757 342h1v1h-1zM759 342h1v1h-1zM761 342h1v1h-1zM763 342h1v1h-1zM765 342h1v1h-1zM767 342h1v1h-1zM769 342h1v1h-1zM771 342h1v1h-1zM773 342h1v1h-1zM775 342h1v1h-1zM777 342h1v1h-1zM779 342h1v1h-1zM781 342h1v1h-1zM783 342h1v1h-1zM785 342h1v1h-1zM787 342h1v1h-1zM789 342h1v1h-1zM791 342h1v1h-1zM793 342h1v1h-1zM795 342h1v1h-1zM797 342h1v1h-1zM799 342h1v1h-1zM801 342h1v1h-1zM803 342h1v1h-1zM805 342h1v1h-1zM807 342h1v1h-1zM809 342h1v1h-1zM811 342h1v1h-1zM813 342h1v1h-1zM815 342h1v1h-1zM817 342h1v1h-1zM819 342h1v1h-1zM821 342h1v1h-1zM823 342h1v1h-1zM825 342h1v1h-1zM827 342h1v1h-1zM829 342h1v1h-1zM831 342h1v1h-1zM833 342h1v1h-1zM835 342h1v1h-1zM837 342h1v1h-1zM839 342h1v1h-1zM841 342h1v1h-1zM843 342h1v1h-1zM845 342h1v1h-1zM847 342h1v1h-1zM849 342h1v1h-1zM851 342h1v1h-1zM853 342h1v1h-1zM855 342h1v1h-1zM857 342h1v1h-1zM859 342h1v1h-1zM861 342h1v1h-1zM863 342h1v1h-1zM865 342h1v1h-1zM867 342h1v1h-1zM869 342h1v1h-1zM871 342h1v1h-1zM873 342h1v1h-1zM875 342h1v1h-1zM877 342h1v1h-1zM879 342h1v1h-1zM881 342h1v1h-1zM883 342h1v1h-1zM885 342h1v1h-1zM887 342h1v1h-1zM889 342h1v1h-1zM891 342h1v1h-1zM893 342h1v1h-1zM895 342h1v1h-1zM897 342h1v1h-1zM899 342h1v1h-1zM901 342h1v1h-1zM903 342h1v1h-1zM905 342h1v1h-1zM907 342h1v1h-1zM909 342h1v1h-1zM911 342h1v1h-1zM913 342h1v1h-1zM915 342h1v1h-1zM917 342h1v1h-1zM919 342h1v1h-1zM921 342h1v1h-1zM923 342h1v1h-1zM925 342h1v1h-1zM927 342h1v1h-1zM929 342h1v1h-1zM931 342h1v1h-1zM933 342h1v1h-1zM935 342h1v1h-1zM937 342h1v1h-1zM939 342h1v1h-1zM941 342h1v1h-1zM943 342h1v1h-1zM945 342h1v1h-1zM947 342h1v1h-1zM949 342h1v1h-1zM951 342h1v1h-1zM953 342h1v1h-1zM955 342h1v1h-1zM957 342h1v1h-1zM959 342h1v1h-1zM961 342h1v1h-1zM963 342h1v1h-1zM965 342h1v1h-1zM967 342h1v1h-1zM969 342h1v1h-1zM971 342h1v1h-1zM973 342h1v1h-1zM975 342h1v1h-1zM977 342h1v1h-1zM979 342h1v1h-1zM981 342h1v1h-1zM983 342h1v1h-1zM985 342h1v1h-1zM987 342h1v1h-1zM989 342h1v1h-1zM991 342h1v1h-1zM993 342h1v1h-1zM995 342h1v1h-1zM997 342h1v1h-1zM999 342h1v1h-1zM1001 342h1v1h-1zM1003 342h1v1h-1zM1005 342h1v1h-1zM1007 342h1v1h-1zM1009 342h1v1h-1zM1011 342h1v1h-1zM1013 342h1v1h-1zM1015 342h1v1h-1zM1017 342h1v1h-1zM1019 342h1v1h-1zM41 341h1v3h-1zM41 339h1v1h-1zM41 345h1v1h-1zM61 341h1v3h-1zM61 339h1v1h-1zM61 345h1v1h-1zM81 341h1v3h-1zM81 339h1v1h-1zM81 345h1v1h-1zM101 341h1v3h-1zM101 339h1v1h-1zM101 345h1v1h-1zM121 341h1v3h-1zM121 339h1v1h-1zM121 345h1v1h-1zM121 336h1v1h-1zM121 338h1v1h-1zM121 346h1v1h-1zM121 348h1v1h-1zM141 341h1v3h-1zM141 339h1v1h-1zM141 345h1v1h-1zM161 341h1v3h-1zM161 339h1v1h-1zM161 345h1v1h-1zM181 341h1v3h-1zM181 339h1v1h-1zM181 345h1v1h-1zM201 341h1v3h-1zM201 339h1v1h-1zM201 345h1v1h-1zM221 341h1v3h-1zM221 339h1v1h-1zM221 345h1v1h-1zM221 336h1v1h-1zM221 338h1v1h-1zM221 346h1v1h-1zM221 348h1v1h-1zM241 341h1v3h-1zM241 339h1v1h-1zM241 345h1v1h-1zM261 341h1v3h-1zM261 339h1v1h-1zM261 345h1v1h-1zM281 341h1v3h-1zM281 339h1v1h-1zM281 345h1v1h-1zM301 341h1v3h-1zM301 339h1v1h-1zM301 345h1v1h-1zM321 341h1v3h-1zM321 339h1v1h-1zM321 345h1v1h-1zM321 336h1v1h-1zM321 338h1v1h-1zM321 346h1v1h-1zM321 348h1v1h-1zM341 341h1v3h-1zM341 339h1v1h-1zM341 345h1v1h-1zM361 341h1v3h-1zM361 339h1v1h-1zM361 345h1v1h-1zM381 341h1v3h-1zM381 339h1v1h-1zM381 345h1v1h-1zM401 341h1v3h-1zM401 339h1v1h-1zM401 345h1v1h-1zM421 341h1v3h-1zM421 339h1v1h-1zM421 345h1v1h-1zM421 336h1v1h-1zM421 338h1v1h-1zM421 346h1v1h-1zM421 348h1v1h-1zM441 341h1v3h-1zM441 339h1v1h-1zM441 345h1v1h-1zM461 341h1v3h-1zM461 339h1v1h-1zM461 345h1v1h-1zM481 341h1v3h-1zM481 339h1v1h-1zM481 345h1v1h-1zM501 341h1v3h-1zM501 339h1v1h-1zM501 345h1v1h-1zM521 341h1v3h-1zM521 339h1v1h-1zM521 345h1v1h-1zM521 336h1v1h-1zM521 338h1v1h-1zM521 346h1v1h-1zM521 348h1v1h-1zM541 341h1v3h-1zM541 339h1v1h-1zM541 345h1v1h-1zM561 341h1v3h-1zM561 339h1v1h-1zM561 345h1v1h-1zM581 341h1v3h-1zM581 339h1v1h-1zM581 345h1v1h-1zM601 341h1v3h-1zM601 339h1v1h-1zM601 345h1v1h-1zM621 341h1v3h-1zM621 339h1v1h-1zM621 345h1v1h-1zM621 336h1v1h-1zM621 338h1v1h-1zM621 346h1v1h-1zM621 348h1v1h-1zM641 341h1v3h-1zM641 339h1v1h-1zM641 345h1v1h-1zM661 341h1v3h-1zM661 339h1v1h-1zM661 345h1v1h-1zM681 341h1v3h-1zM681 339h1v1h-1zM681 345h1v1h-1zM701 341h1v3h-1zM701 339h1v1h-1zM701 345h1v1h-1zM721 341h1v3h-1zM721 339h1v1h-1zM721 345h1v1h-1zM721 336h1v1h-1zM721 338h1v1h-1zM721 346h1v1h-1zM721 348h1v1h-1zM741 341h1v3h-1zM741 339h1v1h-1zM741 345h1v1h-1zM761 341h1v3h-1zM761 339h1v1h-1zM761 345h1v1h-1zM781 341h1v3h-1zM781 339h1v1h-1zM781 345h1v1h-1zM801 341h1v3h-1zM801 339h1v1h-1zM801 345h1v1h-1zM821 341h1v3h-1zM821 339h1v1h-1zM821 345h1v1h-1zM821 336h1v1h-1zM821 338h1v1h-1zM821 346h1v1h-1zM821 348h1v1h-1zM841 341h1v3h-1zM841 339h1v1h-1zM841 345h1v1h-1zM861 341h1v3h-1zM861 339h1v1h-1zM861 345h1v1h-1zM881 341h1v3h-1zM881 339h1v1h-1zM881 345h1v1h-1zM901 341h1v3h-1zM901 339h1v1h-1zM901 345h1v1h-1zM921 341h1v3h-1zM921 339h1v1h-1zM921 345h1v1h-1zM921 336h1v1h-1zM921 338h1v1h-1zM921 346h1v1h-1zM921 348h1v1h-1zM941 341h1v3h-1zM941 339h1v1h-1zM941 345h1v1h-1zM961 341h1v3h-1zM961 339h1v1h-1zM961 345h1v1h-1zM981 341h1v3h-1zM981 339h1v1h-1zM981 345h1v1h-1zM1001 341h1v3h-1zM1001 339h1v1h-1zM1001 345h1v1h-1zM521 24h1v1h-1zM521 26h1v1h-1zM521 28h1v1h-1zM521 30h1v1h-1zM521 32h1v1h-1zM521 34h1v1h-1zM521 36h1v1h-1zM521 38h1v1h-1zM521 40h1v1h-1zM521 46h1v1h-1zM521 48h1v1h-1zM521 50h1v1h-1zM521 52h1v1h-1zM521 54h1v1h-1zM521 56h1v1h-1zM521 58h1v1h-1zM521 60h1v1h-1zM521 62h1v1h-1zM521 64h1v1h-1zM521 66h1v1h-1zM521 72h1v1h-1zM521 74h1v1h-1zM521 76h1v1h-1zM521 78h1v1h-1zM521 80h1v1h-1zM521 82h1v1h-1zM521 84h1v1h-1zM521 86h1v1h-1zM521 88h1v1h-1zM521 90h1v1h-1zM521 92h1v1h-1zM521 98h1v1h-1zM521 100h1v1h-1zM521 102h1v1h-1zM521 104h1v1h-1zM521 106h1v1h-1zM521 108h1v1h-1zM521 110h1v1h-1zM521 112h1v1h-1zM521 114h1v1h-1zM521 116h1v1h-1zM521 118h1v1h-1zM521 124h1v1h-1zM521 126h1v1h-1zM521 128h1v1h-1zM521 130h1v1h-1zM521 132h1v1h-1zM521 134h1v1h-1zM521 136h1v1h-1zM521 138h1v1h-1zM521 140h1v1h-1zM521 142h1v1h-1zM521 144h1v1h-1zM521 150h1v1h-1zM521 152h1v1h-1zM521 154h1v1h-1zM521 156h1v1h-1zM521 158h1v1h-1zM521 160h1v1h-1zM521 162h1v1h-1zM521 164h1v1h-1zM521 166h1v1h-1zM521 168h1v1h-1zM521 170h1v1h-1zM521 176h1v1h-1zM521 178h1v1h-1zM521 180h1v1h-1zM521 182h1v1h-1zM521 184h1v1h-1zM521 186h1v1h-1zM521 188h1v1h-1zM521 190h1v1h-1zM521 192h1v1h-1zM521 194h1v1h-1zM521 196h1v1h-1zM521 202h1v1h-1zM521 204h1v1h-1zM521 206h1v1h-1zM521 208h1v1h-1zM521 210h1v1h-1zM521 212h1v1h-1zM521 214h1v1h-1zM521 216h1v1h-1zM521 218h1v1h-1zM521 220h1v1h-1zM521 222h1v1h-1zM521 228h1v1h-1zM521 230h1v1h-1zM521 232h1v1h-1zM521 234h1v1h-1zM521 236h1v1h-1zM521 238h1v1h-1zM521 240h1v1h-1zM521 242h1v1h-1zM521 244h1v1h-1zM521 246h1v1h-1zM521 248h1v1h-1zM521 254h1v1h-1zM521 256h1v1h-1zM521 258h1v1h-1zM521 260h1v1h-1zM521 262h1v1h-1zM521 264h1v1h-1zM521 266h1v1h-1zM521 268h1v1h-1zM521 270h1v1h-1zM521 272h1v1h-1zM521 274h1v1h-1zM521 280h1v1h-1zM521 282h1v1h-1zM521 284h1v1h-1zM521 286h1v1h-1zM521 288h1v1h-1zM521 290h1v1h-1zM521 292h1v1h-1zM521 294h1v1h-1zM521 296h1v1h-1zM521 298h1v1h-1zM521 300h1v1h-1zM521 306h1v1h-1zM521 308h1v1h-1zM521 310h1v1h-1zM521 312h1v1h-1zM521 314h1v1h-1zM521 316h1v1h-1zM521 318h1v1h-1zM521 320h1v1h-1zM521 322h1v1h-1zM521 324h1v1h-1zM521 326h1v1h-1zM521 332h1v1h-1zM521 334h1v1h-1zM521 336h1v1h-1zM521 338h1v1h-1zM521 340h1v1h-1zM521 342h1v1h-1zM521 344h1v1h-1zM521 346h1v1h-1zM521 348h1v1h-1zM521 350h1v1h-1zM521 352h1v1h-1zM521 358h1v1h-1zM521 360h1v1h-1zM521 362h1v1h-1zM521 364h1v1h-1zM521 366h1v1h-1zM521 368h1v1h-1zM521 370h1v1h-1zM521 372h1v1h-1zM521 374h1v1h-1zM521 376h1v1h-1zM521 378h1v1h-1zM521 384h1v1h-1zM521 386h1v1h-1zM521 388h1v1h-1zM521 390h1v1h-1zM521 392h1v1h-1zM521 394h1v1h-1zM521 396h1v1h-1zM521 398h1v1h-1zM521 400h1v1h-1zM521 402h1v1h-1zM521 404h1v1h-1zM521 410h1v1h-1zM521 412h1v1h-1zM521 414h1v1h-1zM521 416h1v1h-1zM521 418h1v1h-1zM521 420h1v1h-1zM521 422h1v1h-1zM521 424h1v1h-1zM521 426h1v1h-1zM521 428h1v1h-1zM521 430h1v1h-1zM521 436h1v1h-1zM521 438h1v1h-1zM521 440h1v1h-1zM521 442h1v1h-1zM521 444h1v1h-1zM521 446h1v1h-1zM521 448h1v1h-1zM521 450h1v1h-1zM521 452h1v1h-1zM521 454h1v1h-1zM521 456h1v1h-1zM521 462h1v1h-1zM521 464h1v1h-1zM521 466h1v1h-1zM521 468h1v1h-1zM521 470h1v1h-1zM521 472h1v1h-1zM521 474h1v1h-1zM521 476h1v1h-1zM521 478h1v1h-1zM521 480h1v1h-1zM521 482h1v1h-1zM521 488h1v1h-1zM521 490h1v1h-1zM521 492h1v1h-1zM521 494h1v1h-1zM521 496h1v1h-1zM521 498h1v1h-1zM521 500h1v1h-1zM521 502h1v1h-1zM521 504h1v1h-1zM521 506h1v1h-1zM521 508h1v1h-1zM521 514h1v1h-1zM521 516h1v1h-1zM521 518h1v1h-1zM521 520h1v1h-1zM521 522h1v1h-1zM521 524h1v1h-1zM521 526h1v1h-1zM521 528h1v1h-1zM521 530h1v1h-1zM521 532h1v1h-1zM521 534h1v1h-1zM521 540h1v1h-1zM521 542h1v1h-1zM521 544h1v1h-1zM521 546h1v1h-1zM521 548h1v1h-1zM521 550h1v1h-1zM521 552h1v1h-1zM521 554h1v1h-1zM521 556h1v1h-1zM521 558h1v1h-1zM521 560h1v1h-1zM521 566h1v1h-1zM521 568h1v1h-1zM521 570h1v1h-1zM521 572h1v1h-1zM521 574h1v1h-1zM521 576h1v1h-1zM521 578h1v1h-1zM521 580h1v1h-1zM521 582h1v1h-1zM521 584h1v1h-1zM521 586h1v1h-1zM521 592h1v1h-1zM521 594h1v1h-1zM521 596h1v1h-1zM521 598h1v1h-1zM521 600h1v1h-1zM521 602h1v1h-1zM521 604h1v1h-1zM521 606h1v1h-1zM521 608h1v1h-1zM521 610h1v1h-1zM521 612h1v1h-1zM521 618h1v1h-1zM521 620h1v1h-1zM521 622h1v1h-1zM521 624h1v1h-1zM521 626h1v1h-1zM521 628h1v1h-1zM521 630h1v1h-1zM521 632h1v1h-1zM521 634h1v1h-1zM521 636h1v1h-1zM521 638h1v1h-1zM521 644h1v1h-1zM521 646h1v1h-1zM521 648h1v1h-1zM521 650h1v1h-1zM521 652h1v1h-1zM521 654h1v1h-1zM521 656h1v1h-1zM521 658h1v1h-1zM521 660h1v1h-1zM521 663h1v1h-1zM521 665h1v1h-1zM521 667h1v1h-1zM520 30h3v1h-3zM518 30h1v1h-1zM524 30h1v1h-1zM520 43h3v1h-3zM521 42h1v3h-1zM518 43h1v1h-1zM524 43h1v1h-1zM520 56h3v1h-3zM518 56h1v1h-1zM524 56h1v1h-1zM520 69h3v1h-3zM521 68h1v3h-1zM518 69h1v1h-1zM524 69h1v1h-1zM520 82h3v1h-3zM518 82h1v1h-1zM524 82h1v1h-1zM515 82h1v1h-1zM517 82h1v1h-1zM525 82h1v1h-1zM527 82h1v1h-1zM520 95h3v1h-3zM521 94h1v3h-1zM518 95h1v1h-1zM524 95h1v1h-1zM520 108h3v1h-3zM518 108h1v1h-1zM524 108h1v1h-1zM520 121h3v1h-3zM521 120h1v3h-1zM518 121h1v1h-1zM524 121h1v1h-1zM520 134h3v1h-3zM518 134h1v1h-1zM524 134h1v1h-1zM520 147h3v1h-3zM521 146h1v3h-1zM518 147h1v1h-1zM524 147h1v1h-1zM515 147h1v1h-1zM517 147h1v1h-1zM525 147h1v1h-1zM527 147h1v1h-1zM520 160h3v1h-3zM518 160h1v1h-1zM524 160h1v1h-1zM520 173h3v1h-3zM521 172h1v3h-1zM518 173h1v1h-1zM524 173h1v1h-1zM520 186h3v1h-3zM518 186h1v1h-1zM524 186h1v1h-1zM520 199h3v1h-3zM521 198h1v3h-1zM518 199h1v1h-1zM524 199h1v1h-1zM520 212h3v1h-3zM518 212h1v1h-1zM524 212h1v1h-1zM515 212h1v1h-1zM517 212h1v1h-1zM525 212h1v1h-1zM527 212h1v1h-1zM520 225h3v1h-3zM521 224h1v3h-1zM518 225h1v1h-1zM524 225h1v1h-1zM520 238h3v1h-3zM518 238h1v1h-1zM524 238h1v1h-1zM520 251h3v1h-3zM521 250h1v3h-1zM518 251h1v1h-1zM524 251h1v1h-1zM520 264h3v1h-3zM518 264h1v1h-1zM524 264h1v1h-1zM520 277h3v1h-3zM521 276h1v3h-1zM518 277h1v1h-1zM524 277h1v1h-1zM515 277h1v1h-1zM517 277h1v1h-1zM525 277h1v1h-1zM527 277h1v1h-1zM520 290h3v1h-3zM518 290h1v1h-1zM524 290h1v1h-1zM520 303h3v1h-3zM521 302h1v3h-1zM518 303h1v1h-1zM524 303h1v1h-1zM520 316h3v1h-3zM518 316h1v1h-1zM524 316h1v1h-1zM520 329h3v1h-3zM521 328h1v3h-1zM518 329h1v1h-1zM524 329h1v1h-1zM520 342h3v1h-3zM518 342h1v1h-1zM524 342h1v1h-1zM515 342h1v1h-1zM517 342h1v1h-1zM525 342h1v1h-1zM527 342h1v1h-1zM520 355h3v1h-3zM521 354h1v3h-1zM518 355h1v1h-1zM524 355h1v1h-1zM520 368h3v1h-3zM518 368h1v1h-1zM524 368h1v1h-1zM520 381h3v1h-3zM521 380h1v3h-1zM518 381h1v1h-1zM524 381h1v1h-1zM520 394h3v1h-3zM518 394h1v1h-1zM524 394h1v1h-1zM520 407h3v1h-3zM521 406h1v3h-1zM518 407h1v1h-1zM524 407h1v1h-1zM515 407h1v1h-1zM517 407h1v1h-1zM525 407h1v1h-1zM527 407h1v1h-1zM520 420h3v1h-3zM518 420h1v1h-1zM524 420h1v1h-1zM520 433h3v1h-3zM521 432h1v3h-1zM518 433h1v1h-1zM524 433h1v1h-1zM520 446h3v1h-3zM518 446h1v1h-1zM524 446h1v1h-1zM520 459h3v1h-3zM521 458h1v3h-1zM518 459h1v1h-1zM524 459h1v1h-1zM520 472h3v1h-3zM518 472h1v1h-1zM524 472h1v1h-1zM515 472h1v1h-1zM517 472h1v1h-1zM525 472h1v1h-1zM527 472h1v1h-1zM520 485h3v1h-3zM521 484h1v3h-1zM518 485h1v1h-1zM524 485h1v1h-1zM520 498h3v1h-3zM518 498h1v1h-1zM524 498h1v1h-1zM520 511h3v1h-3zM521 510h1v3h-1zM518 511h1v1h-1zM524 511h1v1h-1zM520 524h3v1h-3zM518 524h1v1h-1zM524 524h1v1h-1zM520 537h3v1h-3zM521 536h1v3h-1zM518 537h1v1h-1zM524 537h1v1h-1zM515 537h1v1h-1zM517 537h1v1h-1zM525 537h1v1h-1zM527 537h1v1h-1zM520 550h3v1h-3zM518 550h1v1h-1zM524 550h1v1h-1zM520 563h3v1h-3zM521 562h1v3h-1zM518 563h1v1h-1zM524 563h1v1h-1zM520 576h3v1h-3zM518 576h1v1h-1zM524 576h1v1h-1zM520 589h3v1h-3zM521 588h1v3h-1zM518 589h1v1h-1zM524 589h1v1h-1zM520 602h3v1h-3zM518 602h1v1h-1zM524 602h1v1h-1zM515 602h1v1h-1zM517 602h1v1h-1zM525 602h1v1h-1zM527 602h1v1h-1zM520 615h3v1h-3zM521 614h1v3h-1zM518 615h1v1h-1zM524 615h1v1h-1zM520 628h3v1h-3zM518 628h1v1h-1zM524 628h1v1h-1zM520 641h3v1h-3zM521 640h1v3h-1zM518 641h1v1h-1zM524 641h1v1h-1zM520 654h3v1h-3zM518 654h1v1h-1zM524 654h1v1h-1zM41 17h1v1h-1zM41 19h1v1h-1zM41 665h1v1h-1zM41 667h1v1h-1zM61 17h1v1h-1zM61 19h1v1h-1zM61 665h1v1h-1zM61 667h1v1h-1zM81 17h1v1h-1zM81 19h1v1h-1zM81 665h1v1h-1zM81 667h1v1h-1zM101 17h1v1h-1zM101 19h1v1h-1zM101 665h1v1h-1zM101 667h1v1h-1zM121 18h1v1h-1zM121 20h1v1h-1zM121 22h1v1h-1zM121 662h1v1h-1zM121 664h1v1h-1zM121 666h1v1h-1zM141 17h1v1h-1zM141 19h1v1h-1zM141 665h1v1h-1zM141 667h1v1h-1zM161 17h1v1h-1zM161 19h1v1h-1zM161 665h1v1h-1zM161 667h1v1h-1zM181 17h1v1h-1zM181 19h1v1h-1zM181 665h1v1h-1zM181 667h1v1h-1zM201 17h1v1h-1zM201 19h1v1h-1zM201 665h1v1h-1zM201 667h1v1h-1zM221 18h1v1h-1zM221 20h1v1h-1zM221 22h1v1h-1zM221 662h1v1h-1zM221 664h1v1h-1zM221 666h1v1h-1zM241 17h1v1h-1zM241 19h1v1h-1zM241 665h1v1h-1zM241 667h1v1h-1zM261 17h1v1h-1zM261 19h1v1h-1zM261 665h1v1h-1zM261 667h1v1h-1zM281 17h1v1h-1zM281 19h1v1h-1zM281 665h1v1h-1zM281 667h1v1h-1zM301 17h1v1h-1zM301 19h1v1h-1zM301 665h1v1h-1zM301 667h1v1h-1zM321 18h1v1h-1zM321 20h1v1h-1zM321 22h1v1h-1zM321 662h1v1h-1zM321 664h1v1h-1zM321 666h1v1h-1zM341 17h1v1h-1zM341 19h1v1h-1zM341 665h1v1h-1zM341 667h1v1h-1zM361 17h1v1h-1zM361 19h1v1h-1zM361 665h1v1h-1zM361 667h1v1h-1zM381 17h1v1h-1zM381 19h1v1h-1zM381 665h1v1h-1zM381 667h1v1h-1zM401 17h1v1h-1zM401 19h1v1h-1zM401 665h1v1h-1zM401 667h1v1h-1zM421 18h1v1h-1zM421 20h1v1h-1zM421 22h1v1h-1zM421 662h1v1h-1zM421 664h1v1h-1zM421 666h1v1h-1zM441 17h1v1h-1zM441 19h1v1h-1zM441 665h1v1h-1zM441 667h1v1h-1zM461 17h1v1h-1zM461 19h1v1h-1zM461 665h1v1h-1zM461 667h1v1h-1zM481 17h1v1h-1zM481 19h1v1h-1zM481 665h1v1h-1zM481 667h1v1h-1zM501 17h1v1h-1zM501 19h1v1h-1zM501 665h1v1h-1zM501 667h1v1h-1zM541 17h1v1h-1zM541 19h1v1h-1zM541 665h1v1h-1zM541 667h1v1h-1zM561 17h1v1h-1zM561 19h1v1h-1zM561 665h1v1h-1zM561 667h1v1h-1zM581 17h1v1h-1zM581 19h1v1h-1zM581 665h1v1h-1zM581 667h1v1h-1zM601 17h1v1h-1zM601 19h1v1h-1zM601 665h1v1h-1zM601 667h1v1h-1zM621 18h1v1h-1zM621 20h1v1h-1zM621 22h1v1h-1zM621 662h1v1h-1zM621 664h1v1h-1zM621 666h1v1h-1zM641 17h1v1h-1zM641 19h1v1h-1zM641 665h1v1h-1zM641 667h1v1h-1zM661 17h1v1h-1zM661 19h1v1h-1zM661 665h1v1h-1zM661 667h1v1h-1zM681 17h1v1h-1zM681 19h1v1h-1zM681 665h1v1h-1zM681 667h1v1h-1zM701 17h1v1h-1zM701 19h1v1h-1zM701 665h1v1h-1zM701 667h1v1h-1zM721 18h1v1h-1zM721 20h1v1h-1zM721 22h1v1h-1zM721 662h1v1h-1zM721 664h1v1h-1zM721 666h1v1h-1zM741 17h1v1h-1zM741 19h1v1h-1zM741 665h1v1h-1zM741 667h1v1h-1zM761 17h1v1h-1zM761 19h1v1h-1zM761 665h1v1h-1zM761 667h1v1h-1zM781 17h1v1h-1zM781 19h1v1h-1zM781 665h1v1h-1zM781 667h1v1h-1zM801 17h1v1h-1zM801 19h1v1h-1zM801 665h1v1h-1zM801 667h1v1h-1zM821 18h1v1h-1zM821 20h1v1h-1zM821 22h1v1h-1zM821 662h1v1h-1zM821 664h1v1h-1zM821 666h1v1h-1zM841 17h1v1h-1zM841 19h1v1h-1zM841 665h1v1h-1zM841 667h1v1h-1zM861 17h1v1h-1zM861 19h1v1h-1zM861 665h1v1h-1zM861 667h1v1h-1zM881 17h1v1h-1zM881 19h1v1h-1zM881 665h1v1h-1zM881 667h1v1h-1zM901 17h1v1h-1zM901 19h1v1h-1zM901 665h1v1h-1zM901 667h1v1h-1zM921 18h1v1h-1zM921 20h1v1h-1zM921 22h1v1h-1zM921 662h1v1h-1zM921 664h1v1h-1zM921 666h1v1h-1zM941 17h1v1h-1zM941 19h1v1h-1zM941 665h1v1h-1zM941 667h1v1h-1zM961 17h1v1h-1zM961 19h1v1h-1zM961 665h1v1h-1zM961 667h1v1h-1zM981 17h1v1h-1zM981 19h1v1h-1zM981 665h1v1h-1zM981 667h1v1h-1zM1001 17h1v1h-1zM1001 19h1v1h-1zM1001 665h1v1h-1zM1001 667h1v1h-1zM21 30h1v1h-1zM23 30h1v1h-1zM1018 30h1v1h-1zM1020 30h1v1h-1zM21 43h1v1h-1zM23 43h1v1h-1zM1018 43h1v1h-1zM1020 43h1v1h-1zM21 56h1v1h-1zM23 56h1v1h-1zM1018 56h1v1h-1zM1020 56h1v1h-1zM21 69h1v1h-1zM23 69h1v1h-1zM1018 69h1v1h-1zM1020 69h1v1h-1zM21 82h1v1h-1zM23 82h1v1h-1zM25 82h1v1h-1zM1016 82h1v1h-1zM1018 82h1v1h-1zM1020 82h1v1h-1zM21 95h1v1h-1zM23 95h1v1h-1zM1018 95h1v1h-1zM1020 95h1v1h-1zM21 108h1v1h-1zM23 108h1v1h-1zM1018 108h1v1h-1zM1020 108h1v1h-1zM21 121h1v1h-1zM23 121h1v1h-1zM1018 121h1v1h-1zM1020 121h1v1h-1zM21 134h1v1h-1zM23 134h1v1h-1zM1018 134h1v1h-1zM1020 134h1v1h-1zM21 147h1v1h-1zM23 147h1v1h-1zM25 147h1v1h-1zM1016 147h1v1h-1zM1018 147h1v1h-1zM1020 147h1v1h-1zM21 160h1v1h-1zM23 160h1v1h-1zM1018 160h1v1h-1zM1020 160h1v1h-1zM21 173h1v1h-1zM23 173h1v1h-1zM1018 173h1v1h-1zM1020 173h1v1h-1zM21 186h1v1h-1zM23 186h1v1h-1zM1018 186h1v1h-1zM1020 186h1v1h-1zM21 199h1v1h-1zM23 199h1v1h-1zM1018 199h1v1h-1zM1020 199h1v1h-1zM21 212h1v1h-1zM23 212h1v1h-1zM25 212h1v1h-1zM1016 212h1v1h-1zM1018 212h1v1h-1zM1020 212h1v1h-1zM21 225h1v1h-1zM23 225h1v1h-1zM1018 225h1v1h-1zM1020 225h1v1h-1zM21 238h1v1h-1zM23 238h1v1h-1zM1018 238h1v1h-1zM1020 238h1v1h-1zM21 251h1v1h-1zM23 251h1v1h-1zM1018 251h1v1h-1zM1020 251h1v1h-1zM21 264h1v1h-1zM23 264h1v1h-1zM1018 264h1v1h-1zM1020 264h1v1h-1zM21 277h1v1h-1zM23 277h1v1h-1zM25 277h1v1h-1zM1016 277h1v1h-1zM1018 277h1v1h-1zM1020 277h1v1h-1zM21 290h1v1h-1zM23 290h1v1h-1zM1018 290h1v1h-1zM1020 290h1v1h-1zM21 303h1v1h-1zM23 303h1v1h-1zM1018 303h1v1h-1zM1020 303h1v1h-1zM21 316h1v1h-1zM23 316h1v1h-1zM1018 316h1v1h-1zM1020 316h1v1h-1zM21 329h1v1h-1zM23 329h1v1h-1zM1018 329h1v1h-1zM1020 329h1v1h-1zM21 355h1v1h-1zM23 355h1v1h-1zM1018 355h1v1h-1zM1020 355h1v1h-1zM21 368h1v1h-1zM23 368h1v1h-1zM1018 368h1v1h-1zM1020 368h1v1h-1zM21 381h1v1h-1zM23 381h1v1h-1zM1018 381h1v1h-1zM1020 381h1v1h-1zM21 394h1v1h-1zM23 394h1v1h-1zM1018 394h1v1h-1zM1020 394h1v1h-1zM21 407h1v1h-1zM23 407h1v1h-1zM25 407h1v1h-1zM1016 407h1v1h-1zM1018 407h1v1h-1zM1020 407h1v1h-1zM21 420h1v1h-1zM23 420h1v1h-1zM1018 420h1v1h-1zM1020 420h1v1h-1zM21 433h1v1h-1zM23 433h1v1h-1zM1018 433h1v1h-1zM1020 433h1v1h-1zM21 446h1v1h-1zM23 446h1v1h-1zM1018 446h1v1h-1zM1020 446h1v1h-1zM21 459h1v1h-1zM23 459h1v1h-1zM1018 459h1v1h-1zM1020 459h1v1h-1zM21 472h1v1h-1zM23 472h1v1h-1zM25 472h1v1h-1zM1016 472h1v1h-1zM1018 472h1v1h-1zM1020 472h1v1h-1zM21 485h1v1h-1zM23 485h1v1h-1zM1018 485h1v1h-1zM1020 485h1v1h-1zM21 498h1v1h-1zM23 498h1v1h-1zM1018 498h1v1h-1zM1020 498h1v1h-1zM21 511h1v1h-1zM23 511h1v1h-1zM1018 511h1v1h-1zM1020 511h1v1h-1zM21 524h1v1h-1zM23 524h1v1h-1zM1018 524h1v1h-1zM1020 524h1v1h-1zM21 537h1v1h-1zM23 537h1v1h-1zM25 537h1v1h-1zM1016 537h1v1h-1zM1018 537h1v1h-1zM1020 537h1v1h-1zM21 550h1v1h-1zM23 550h1v1h-1zM1018 550h1v1h-1zM1020 550h1v1h-1zM21 563h1v1h-1zM23 563h1v1h-1zM1018 563h1v1h-1zM1020 563h1v1h-1zM21 576h1v1h-1zM23 576h1v1h-1zM1018 576h1v1h-1zM1020 576h1v1h-1zM21 589h1v1h-1zM23 589h1v1h-1zM1018 589h1v1h-1zM1020 589h1v1h-1zM21 602h1v1h-1zM23 602h1v1h-1zM25 602h1v1h-1zM1016 602h1v1h-1zM1018 602h1v1h-1zM1020 602h1v1h-1zM21 615h1v1h-1zM23 615h1v1h-1zM1018 615h1v1h-1zM1020 615h1v1h-1zM21 628h1v1h-1zM23 628h1v1h-1zM1018 628h1v1h-1zM1020 628h1v1h-1zM21 641h1v1h-1zM23 641h1v1h-1zM1018 641h1v1h-1zM1020 641h1v1h-1zM21 654h1v1h-1zM23 654h1v1h-1zM1018 654h1v1h-1zM1020 654h1v1h-1z" fill="#b2a580" stroke="none"/><rect x="283" y="8" width="475" height="1" fill="#f4f400"/><path d="M281 1h3v2h-1v10h1v2h-3z" fill="#a39ca8"/><path d="M760 1h-3v2h1v10h-1v2h3z" fill="#a39ca8"/><g shape-rendering="auto"><rect x="412" y="5" width="8" height="11" rx="1.5" fill="#ffa000"/></g><path d="M413 6h6v1.5h-2v7h-2v-7h-2z" fill="#000"/><g shape-rendering="auto"><path d="M517.5 1h8l-4 4.5z" fill="#ffa000"/><path d="M515.5 17h12l-6 6.5z" fill="#ffa000"/></g><path d="M296 24h10v1h1v11h-1v1h-2v1h-2v1h-2v-1h-2v-1h-2v-1h-1v-11h1z" fill="#ffa000"/><path d="M296 25h10v2h-4v9h-2v-9h-4z" fill="#000"/><g shape-rendering="auto"><path d="M1010 320.5l6-6v12z" fill="#ffff00"/></g><rect x="1016" y="320" width="5" height="1.4" fill="#ffff00"/><g shape-rendering="auto"><path d="M0 337L1.5 335.5H13L20 343 13 351H1.5L0 349.5z" fill="#000"/><path d="M0 336L1.5 334.5H12.6L19.6 342.5 12.6 350H1.5L0 348.5z" fill="#ffff00"/><path d="M0 336.3L1.5 335H12.6" fill="none" stroke="#fff" stroke-width="1"/><rect x="0" y="336.5" width="1" height="12" fill="#dcdc00"/></g><polygon points="7.43,347.80 7.43,338.56 5.06,340.25 5.06,338.98 7.54,337.27 8.78,337.27 8.78,347.80" fill="#000" stroke="#000" stroke-width="0.9" shape-rendering="auto"/><text x="-0.3" y="15" font-family="Liberation Serif, serif" font-size="21.5" font-weight="bold" fill="#4a0088" textLength="31.3" lengthAdjust="spacingAndGlyphs">Tek</text><text y="12.8" x="34.27 44.96 56.45 65.22" fill="#fff" stroke="#fff" stroke-width="0.45" font-size="15.3" >Вып.</text><text y="12.8" x="925.52 935.36 944.47 953.35 961.60 969.84 977.13" fill="#fff" stroke="#fff" stroke-width="0.45" font-size="15.3" >Запуск?</text><rect x="20.5" y="670.5" width="555" height="20" rx="5" ry="5" fill="#0b0a05" stroke="#fff" stroke-width="1"/><rect x="584.5" y="670.5" width="147" height="37" rx="5" ry="5" fill="#0b0a05" stroke="#fff" stroke-width="1"/><rect x="741.5" y="670.5" width="106" height="37" rx="5" ry="5" fill="#0b0a05" stroke="#fff" stroke-width="1"/><rect x="857.5" y="670.5" width="164" height="37" rx="5" ry="5" fill="#0b0a05" stroke="#fff" stroke-width="1"/><rect x="909.5" y="729.5" width="112" height="36" rx="5" ry="5" fill="#0b0a05" stroke="#fff" stroke-width="1"/><g shape-rendering="auto"><rect x="26" y="673" width="25" height="16" rx="7.5" ry="8" fill="#ffff00"/></g><polygon points="38.28,686.00 38.28,676.76 35.91,678.45 35.91,677.18 38.39,675.47 39.63,675.47 39.63,686.00" fill="#000" stroke="#000" stroke-width="0.6" shape-rendering="auto"/><text y="685.8" x="68.06 77.85 87.65 97.44 111.48" fill="#ffff00" stroke="#ffff00" stroke-width="0.45" font-size="15.3" >200mB</text><text y="685.8" x="130.35" fill="#ffff00" stroke="#ffff00" stroke-width="0.45" font-size="16" >Ω</text><text y="685.8" x="590.36 600.64 610.93 616.95 627.24 637.83" fill="#fff" stroke="#fff" stroke-width="0.45" font-size="15.3" > 0.0μc</text><polygon points="594.21,685.80 594.21,676.56 591.83,678.25 591.83,676.98 594.32,675.27 595.56,675.27 595.56,685.80" fill="#fff" stroke="#fff" stroke-width="0.45" shape-rendering="auto"/><g shape-rendering="auto"><rect x="589" y="691" width="12" height="13" rx="1.5" fill="#ffa000"/></g><path d="M590 692h10v2h-4v9h-2v-9h-4z" fill="#000"/><path d="M602 697h6v1h-6z" fill="#ffa000"/><g shape-rendering="auto"><path d="M607 694l4.2 3.5-4.2 3.5z" fill="#ffa000"/><path d="M612 694h11.2l-5.6 6.2z" fill="#ffa000"/></g><text y="702.8" x="628.26 638.45 648.64 654.57 664.76 674.95 685.14 695.33 705.83" fill="#ffa000" stroke="#ffa000" stroke-width="0.45" font-size="15.3" >22.0000μc</text><clipPath id="c3"><rect x="742" y="671" width="101" height="36"/></clipPath><g clip-path="url(#c3)"><text y="685.8" x="747.86 758.07 768.28 774.23 784.44 798.89 808.72 821.41 831.88 837.83" fill="#fff" stroke="#fff" stroke-width="0.45" font-size="15.3" > 0.0Мвыб/с</text><polygon points="751.71,685.80 751.71,676.56 749.33,678.25 749.33,676.98 751.82,675.27 753.06,675.27 753.06,685.80" fill="#fff" stroke="#fff" stroke-width="0.45" shape-rendering="auto"/></g><text y="702.8" x="747.86 757.79 767.73 777.66" fill="#fff" stroke="#fff" stroke-width="0.45" font-size="15.3" > 000</text><polygon points="751.71,702.80 751.71,693.56 749.33,695.25 749.33,693.98 751.82,692.27 753.06,692.27 753.06,702.80" fill="#fff" stroke="#fff" stroke-width="0.45" shape-rendering="auto"/><text y="702.8" x="792.26 801.03 811.30 821.04 831.31" fill="#fff" stroke="#fff" stroke-width="0.45" font-size="15.3" >точек</text><g shape-rendering="auto"><rect x="889" y="673" width="25" height="16" rx="7.5" ry="8" fill="#ffff00"/></g><polygon points="902.28,686.00 902.28,676.76 899.91,678.45 899.91,677.18 902.39,675.47 903.63,675.47 903.63,686.00" fill="#000" stroke="#000" stroke-width="0.6" shape-rendering="auto"/><path d="M928 685h5l3-9h4" fill="none" stroke="#fff" stroke-width="2" shape-rendering="auto"/><text y="685.8" x="953.75 963.44 973.13 978.56 988.25 1002.18" fill="#fff" stroke="#fff" stroke-width="0.45" font-size="15.3" >68.0mB</text><text y="744.5999999999999" x="915.26 924.01" fill="#fff" stroke="#fff" stroke-width="0.45" font-size="15.3" >24</text><text y="744.5999999999999" x="939.77 953.55 963.09" fill="#fff" stroke="#fff" stroke-width="0.45" font-size="15.3" >Май</text><text y="744.5999999999999" x="978.26 987.95 997.64 1007.34" fill="#fff" stroke="#fff" stroke-width="0.45" font-size="15.3" >2007</text><text y="760.6999999999999" x="915.43 925.30 935.17 940.78 950.66 960.53 966.14 976.01" fill="#fff" stroke="#fff" stroke-width="0.45" font-size="15.3" >02:30:54</text><g shape-rendering="auto"><rect x="21" y="715" width="113" height="53" rx="5" fill="#00061c"/><rect x="20" y="714" width="113" height="53" rx="5" fill="#a6d6ff"/><rect x="21" y="715" width="112" height="52" rx="4.5" fill="#6faaf6"/><rect x="22" y="716" width="111" height="51" rx="4" fill="#5588e3"/></g><g shape-rendering="auto"><rect x="139" y="715" width="113" height="53" rx="5" fill="#00061c"/><rect x="138" y="714" width="113" height="53" rx="5" fill="#a6d6ff"/><rect x="139" y="715" width="112" height="52" rx="4.5" fill="#6faaf6"/><rect x="140" y="716" width="111" height="51" rx="4" fill="#5588e3"/></g><g shape-rendering="auto"><rect x="257" y="715" width="113" height="53" rx="5" fill="#00061c"/><rect x="256" y="714" width="113" height="53" rx="5" fill="#a6d6ff"/><rect x="257" y="715" width="112" height="52" rx="4.5" fill="#6faaf6"/><rect x="258" y="716" width="111" height="51" rx="4" fill="#5588e3"/></g><g shape-rendering="auto"><rect x="375" y="715" width="113" height="53" rx="5" fill="#00061c"/><rect x="374" y="714" width="113" height="53" rx="5" fill="#a6d6ff"/><rect x="375" y="715" width="112" height="52" rx="4.5" fill="#6faaf6"/><rect x="376" y="716" width="111" height="51" rx="4" fill="#5588e3"/></g><text y="737.8" x="50.84 62.72 72.91 84.81 95.03" fill="#000" stroke="#000" stroke-width="0.6" font-size="15.3" >Режим</text><rect x="42" y="742" width="71" height="16" fill="#c6cbe6"/><text y="754.4" x="42.84 54.29 66.54 76.54 86.30 96.05 103.99" fill="#000" stroke="#000" stroke-width="0.6" font-size="15.3" >Выборка</text><text y="728.8" x="171.49 182.78 192.64 202.11 211.49" fill="#000" stroke="#000" stroke-width="0.6" font-size="15.3" >Длина</text><text y="745.5999999999999" x="167.04 176.30 185.78 197.27 206.53 214.51" fill="#000" stroke="#000" stroke-width="0.6" font-size="15.3" >памяти</text><rect x="175" y="750" width="40" height="16" fill="#c6cbe6"/><text y="762.4" x="176.43 186.32 196.20 206.09" fill="#000" stroke="#000" stroke-width="0.6" font-size="15.3" > 000</text><polygon points="180.28,762.40 180.28,753.16 177.91,754.85 177.91,753.58 180.39,751.87 181.63,751.87 181.63,762.40" fill="#000" stroke="#000" stroke-width="0.6" shape-rendering="auto"/><text y="728.5" x="289.32 301.52 311.44 321.09 330.75" fill="#000" stroke="#000" stroke-width="0.6" font-size="15.3" >Сброс</text><text y="745.5999999999999" x="269.04 278.54 288.27 298.42 308.15 319.61 329.34 339.01 348.78" fill="#000" stroke="#000" stroke-width="0.6" font-size="15.3" >положения</text><text y="762.5999999999999" x="260.54 268.63" fill="#000" stroke="#000" stroke-width="0.6" font-size="15.3" >по</text><text y="762.5999999999999" x="284.04 291.43 301.75 312.07 322.42 331.25 341.57 351.83 360.65" fill="#000" stroke="#000" stroke-width="0.6" font-size="15.3" >горизонт.</text><text y="737.8" x="401.38 415.29 424.32 434.84 445.62 456.15" fill="#000" stroke="#000" stroke-width="0.6" font-size="15.3" >Отобр.</text><text y="754.4" x="408.46 418.02 426.72 436.54 446.13" fill="#000" stroke="#000" stroke-width="0.6" font-size="15.3" >осцил</text></svg>
</body></html>
